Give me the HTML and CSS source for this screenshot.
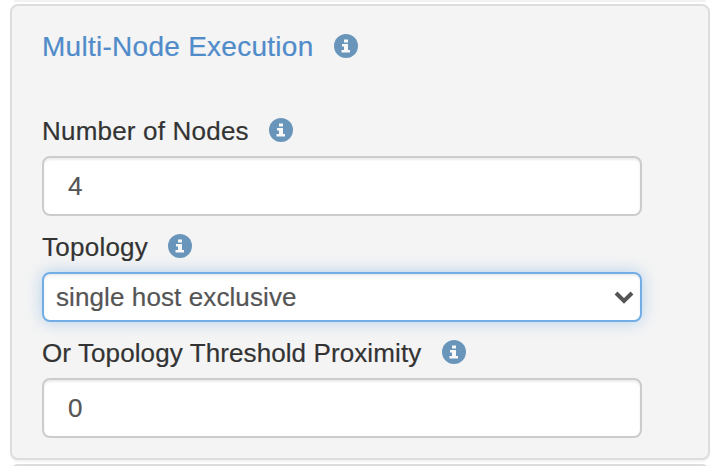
FILE: index.html
```html
<!DOCTYPE html>
<html lang="en">
<head>
<meta charset="utf-8">
<title>Multi-Node Execution</title>
<link rel="stylesheet" href="styles.css">
</head>
<body>
<svg class="defs" width="0" height="0"><symbol id="info" viewBox="0 0 24 24"><circle cx="12" cy="12" r="12"/><path fill="#f8f8f8" d="M10 5.500h4v3h-4zM8 10h6v6h2v2.500H7.500V16H10v-3.500H8z"/></symbol></svg>
<div class="previous"></div>
<main class="panel">
<h1 class="title"><span class="text title-text">Multi-Node Execution</span><svg class="info"><use href="#info"/></svg></h1>
<div class="row nodes"><label class="text nodes-text" for="nodes">Number of Nodes</label><svg class="info"><use href="#info"/></svg></div>
<input class="field" id="nodes" value="4">
<div class="row topology"><span class="text topology-text">Topology</span><svg class="info"><use href="#info"/></svg></div>
<div class="select"><span class="select-text">single host exclusive</span><svg class="chevron" viewBox="0 0 20 14"><path d="M2 3l8 8 8-8"/></svg></div>
<div class="row proximity"><label class="text proximity-text" for="proximity">Or Topology Threshold Proximity</label><svg class="info"><use href="#info"/></svg></div>
<input class="field" id="proximity" value="0">
</main>
<div class="next"></div>
</body>
</html>
```
FILE: styles.css
```css
* { box-sizing: border-box; }
body { margin: 0; height: 466px; overflow: hidden; background: #fff; font: 26px/32px "Liberation Sans", Arial, sans-serif; color: #333; -webkit-text-stroke: .2px currentColor; }
.defs { position: absolute; }
.previous { width: 692px; height: 2px; margin: 0 0 2px 14px; background: #f2f2f2; }
.panel { width: 700px; height: 456px; margin-left: 10px; padding: 23px 30px 0; border: 2px solid #ddd; border-radius: 8px; background: #f4f4f4; box-shadow: 0 2px 2px rgba(0,0,0,.05); }
.title { display: flex; align-items: center; height: 34px; margin: 0; font-size: 28px; font-weight: 400; letter-spacing: .27px; color: #508bca; }
.row { display: flex; align-items: center; height: 32px; }
.text { white-space: nowrap; padding-top: 2px; }
.title-text { width: 271px; }
.nodes-text { width: 206px; letter-spacing: .2px; }
.topology-text { width: 105px; letter-spacing: .25px; }
.proximity-text { width: 379px; letter-spacing: .1px; }
.info { width: 24px; height: 24px; margin-left: 21px; fill: #6995bb; flex: none; }
.nodes { margin-top: 51px; }
.field { display: block; width: 600px; height: 60px; margin: 10px 0 0; padding: 1px 24px 0; border: 2px solid #ccc; border-radius: 8px; background: #fff; color: #555; font: inherit; outline: 0; box-shadow: inset 0 2px 2px rgba(0,0,0,.075); }
.topology { margin-top: 14px; }
.select { display: flex; align-items: center; justify-content: space-between; width: 600px; height: 50px; margin-top: 10px; padding: 0 6px 0 12px; border: 2px solid #72ade6; border-radius: 8px; background: #fff; color: #555; box-shadow: inset 0 2px 2px rgba(0,0,0,.075), 0 0 16px rgba(114,173,230,.5); }
.select-text { letter-spacing: .1px; }
.chevron { width: 20px; height: 14px; fill: none; stroke: #555; stroke-width: 4; }
.proximity { margin-top: 14px; }
.next { width: 700px; height: 20px; margin: 4px 0 0 10px; border: 2px solid #ddd; border-radius: 8px; background: #f4f4f4; }
```
